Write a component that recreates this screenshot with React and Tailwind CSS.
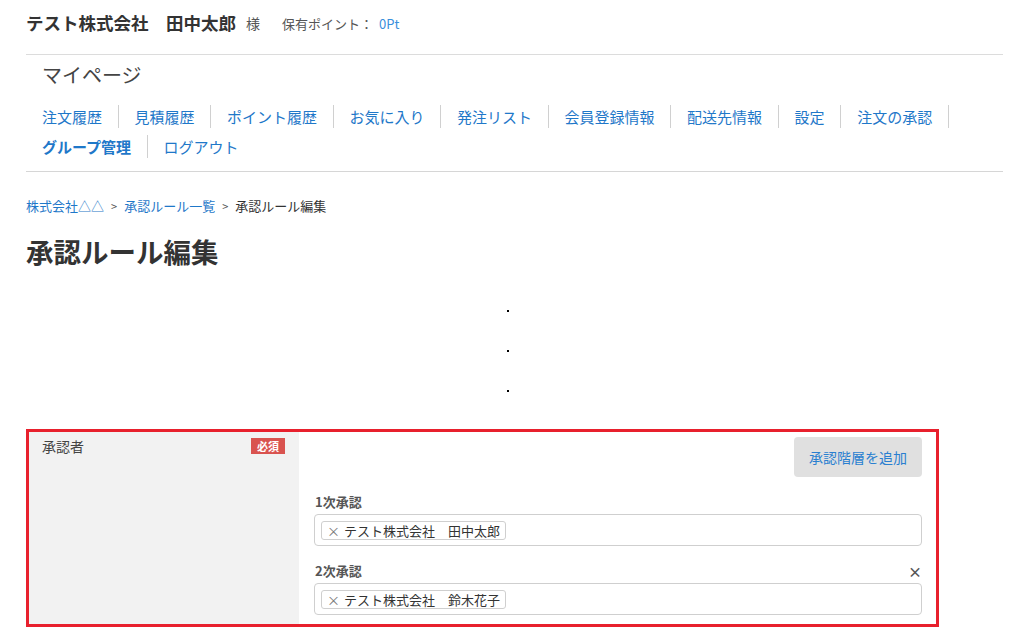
import React from 'react';

const navRow1 = ['注文履歴', '見積履歴', 'ポイント履歴', 'お気に入り', '発注リスト', '会員登録情報', '配送先情報', '設定', '注文の承認'];

const NavItem = ({ label, bold, last }) => (
  <li className="h-[30px] flex items-center">
    <a
      href="#"
      className={`pl-4 pr-[15.5px] leading-[23px] text-[15px] text-[#1f78c9] ${last ? '' : 'border-r border-[#d0d0d0]'} ${bold ? 'font-bold' : ''}`}
    >
      {label}
    </a>
  </li>
);

const Tag = ({ name }) => (
  <span className="inline-flex items-center h-[19px] px-[5px] border border-[#cfcfcf] rounded-[3px] text-[13px] leading-[17px] text-[#333]">
    <span className="text-[#777] mr-[4px]">×</span>
    {name}
  </span>
);

const ApproverField = ({ label, name, removable }) => (
  <div>
    <div className="flex items-center justify-between h-[18px] mb-[3px]">
      <span className="text-[13px] font-bold text-[#555] pl-[1px]">{label}</span>
      {removable && <span className="text-[14px] font-bold text-[#555]">×</span>}
    </div>
    <div className="h-[32px] border border-[#cfcfcf] rounded-[4px] px-[6px] flex items-center">
      <Tag name={name} />
    </div>
  </div>
);

export default function App() {
  return (
    <div
      className="min-h-screen bg-white text-[#333]"
      style={{ fontFamily: '"Noto Sans CJK JP", "Noto Sans", sans-serif' }}
    >
      <div className="pl-[26px] pr-[21px]">
        <header className="h-[55px] pb-[7px] flex items-center border-b border-[#dcdcdc]">
          <span className="text-[17.5px] font-bold text-[#333]">テスト株式会社　田中太郎</span>
          <span className="ml-[10px] text-[14px] text-[#555]">様</span>
          <span className="ml-[22px] text-[13px] text-[#555]">保有ポイント：</span>
          <span className="ml-[6px] text-[13px] text-[#3a8fdc]">0Pt</span>
        </header>

        <div className="pb-[10px] border-b border-[#d6d6d6]">
          <h2 className="pt-[9px] pl-4 text-[20px] leading-[22px] font-normal text-[#444]">マイページ</h2>
          <ul className="mt-[15px] flex flex-wrap">
            {navRow1.map((l) => (
              <NavItem key={l} label={l} />
            ))}
            <NavItem label="グループ管理" bold />
            <NavItem label="ログアウト" last />
          </ul>
        </div>

        <nav className="mt-[25px] flex items-center text-[13px] leading-[18px]">
          <a href="#" className="text-[#1f78c9]">株式会社△△</a>
          <span className="mx-[7px] text-[#555] text-[11px]">&gt;</span>
          <a href="#" className="text-[#1f78c9]">承認ルール一覧</a>
          <span className="mx-[7px] text-[#555] text-[11px]">&gt;</span>
          <span className="text-[#333]">承認ルール編集</span>
        </nav>

        <h1 className="mt-[18px] text-[27.5px] leading-[36px] font-bold text-[#333]">承認ルール編集</h1>

        <div className="mt-[41px] pl-[481px] flex flex-col gap-[38px]">
          <span className="w-[2px] h-[2px] bg-black" />
          <span className="w-[2px] h-[2px] bg-black" />
          <span className="w-[2px] h-[2px] bg-black" />
        </div>

        <div className="mt-[37px] w-[913px] border-[3px] border-[#e8202d] flex">
          <div className="w-[270px] bg-[#f2f2f2] pt-[5px] pl-[13px] pr-[14px] flex items-start justify-between">
            <span className="text-[14px] leading-[18px] text-[#444]">承認者</span>
            <span className="mt-[1px] h-[16px] px-[6px] bg-[#d9534f] text-white text-[11px] leading-[16px] font-bold">必須</span>
          </div>
          <div className="flex-1 pt-[5px] pl-[15px] pr-[14px] pb-[9px]">
            <div className="flex justify-end">
              <button className="h-[40px] px-[15px] rounded-[4px] bg-[#e0e0e0] text-[14px] text-[#2a7fd0]">
                承認階層を追加
              </button>
            </div>
            <div className="mt-[16px]">
              <ApproverField label="1次承認" name="テスト株式会社　田中太郎" />
            </div>
            <div className="mt-[16px]">
              <ApproverField label="2次承認" name="テスト株式会社　鈴木花子" removable />
            </div>
          </div>
        </div>
      </div>
    </div>
  );
}
